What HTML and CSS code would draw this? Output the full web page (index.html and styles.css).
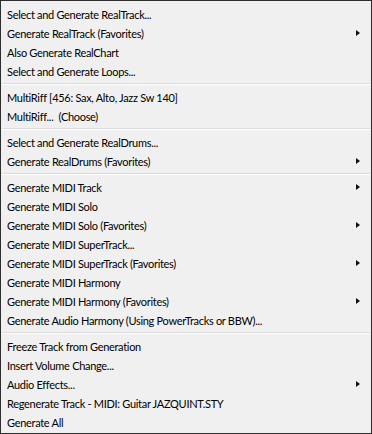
FILE: index.html
```html
<!DOCTYPE html>
<html lang="en">
<head>
  <meta charset="UTF-8">
  <title>Track Menu</title>
  <link rel="stylesheet" href="styles.css">
</head>
<body>
  <div class="menu">
    <div class="item">Select and Generate RealTrack...</div>
    <div class="item sub">Generate RealTrack (Favorites)<span class="arrow"></span></div>
    <div class="item">Also Generate RealChart</div>
    <div class="item">Select and Generate Loops...</div>
    <div class="sep"></div>
    <div class="item">MultiRiff [456: Sax, Alto, Jazz Sw 140]</div>
    <div class="item">MultiRiff...&nbsp; (Choose)</div>
    <div class="sep"></div>
    <div class="item">Select and Generate RealDrums...</div>
    <div class="item sub">Generate RealDrums (Favorites)<span class="arrow"></span></div>
    <div class="sep"></div>
    <div class="item sub">Generate MIDI Track<span class="arrow"></span></div>
    <div class="item">Generate MIDI Solo</div>
    <div class="item sub">Generate MIDI Solo (Favorites)<span class="arrow"></span></div>
    <div class="item">Generate MIDI SuperTrack...</div>
    <div class="item sub">Generate MIDI SuperTrack (Favorites)<span class="arrow"></span></div>
    <div class="item">Generate MIDI Harmony</div>
    <div class="item sub">Generate MIDI Harmony (Favorites)<span class="arrow"></span></div>
    <div class="item">Generate Audio Harmony (Using PowerTracks or BBW)...</div>
    <div class="sep"></div>
    <div class="item">Freeze Track from Generation</div>
    <div class="item">Insert Volume Change...</div>
    <div class="item sub">Audio Effects...<span class="arrow"></span></div>
    <div class="item">Regenerate Track - MIDI: Guitar JAZQUINT.STY</div>
    <div class="item">Generate All</div>
  </div>
</body>
</html>
```

FILE: styles.css
```css
body {
  margin: 0;
  font-family: Lato, "Noto Sans", sans-serif;
  font-size: 11px;
  letter-spacing: -0.3px;
  color: #000;
}

.menu {
  width: 372px;
  height: 434px;
  box-sizing: border-box;
  border: 1px solid #2e2e2e;
  background-color: #f0f0f0;
  padding: 3px 0 2px 0;
}

.item {
  display: flex;
  justify-content: space-between;
  align-items: center;
  height: 19px;
  line-height: 19px;
  padding: 1px 11px 0 6px;
  box-sizing: border-box;
  white-space: nowrap;
}

.arrow {
  width: 0;
  height: 0;
  border-left: 4px solid #111;
  border-top: 3.5px solid transparent;
  border-bottom: 3.5px solid transparent;
}

.sep {
  height: 0;
  margin: 3px 1px 2px 1px;
  border-top: 1px solid #dcdcdc;
  border-bottom: 1px solid #fff;
}

.sep:last-of-type {
  margin-bottom: 1px;
}
```
